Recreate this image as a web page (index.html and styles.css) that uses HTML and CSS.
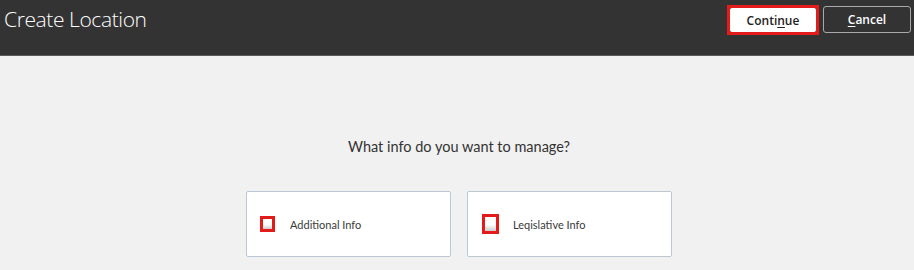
FILE: index.html
```html
<!DOCTYPE html>
<html lang="en">
<head>
  <meta charset="UTF-8" />
  <title>Create Location</title>
  <link rel="stylesheet" href="styles.css">
</head>
<body>
  <header class="topbar">
    <h1>Create Location</h1>
    <div class="actions">
      <span class="highlight"><button class="btn btn-primary">Conti<u>n</u>ue</button></span>
      <button class="btn btn-ghost"><u>C</u>ancel</button>
    </div>
  </header>

  <main class="content">
    <h2>What info do you want to manage?</h2>
    <div class="options">
      <label class="option">
        <span class="check"><span class="box"></span></span>
        <span class="text">Additional Info</span>
      </label>
      <label class="option option-alt">
        <span class="check"><span class="box"></span></span>
        <span class="text">Leqislative Info</span>
      </label>
    </div>
  </main>
</body>
</html>
```

FILE: styles.css
```css
:root {
  --bar-bg: #333333;
  --page-bg: #f1f1f1;
  --text: #333;
  --mark: #e31b1b;
  --card-border: #bcc7d4;
}

body {
  margin: 0;
  background: var(--page-bg);
  font-family: Lato, "Open Sans", sans-serif;
  color: var(--text);
}

.topbar {
  height: 55px;
  background: var(--bar-bg);
  border-bottom: 1px solid #5a5a5a;
  display: flex;
  justify-content: space-between;
  align-items: flex-start;
  padding: 0 3px 0 4px;
}

.topbar h1 {
  margin: 5px 0 0;
  font-family: "Open Sans", sans-serif;
  font-weight: 300;
  font-size: 21px;
  color: #fff;
  letter-spacing: -0.4px;
}

.actions {
  display: flex;
  align-items: flex-start;
  gap: 4px;
  padding-top: 5px;
}

.highlight {
  display: block;
  border: 3px solid var(--mark);
}

.btn {
  font-family: "Open Sans", sans-serif;
  font-size: 12px;
  font-weight: 600;
  height: 24px;
  padding: 0;
  border-radius: 2px;
  cursor: pointer;
}

.btn u {
  text-underline-offset: 2px;
}

.btn-primary {
  width: 86px;
  background: #fff;
  color: #222;
  border: none;
  display: block;
}

.btn-ghost {
  width: 88px;
  height: 27px;
  margin-top: 1px;
  background: transparent;
  color: #fff;
  border: 1px solid #a9a9a9;
  border-radius: 3px;
}

.content {
  display: flex;
  flex-direction: column;
  align-items: center;
  padding-left: 4px;
}

.content h2 {
  margin: 82px 0 0;
  font-size: 14.5px;
  font-weight: 400;
  color: var(--text);
}

.options {
  display: flex;
  gap: 16px;
  margin-top: 36px;
}

.option {
  box-sizing: border-box;
  width: 205px;
  height: 66px;
  background: #fff;
  border: 1px solid var(--card-border);
  border-radius: 2px;
  display: flex;
  align-items: center;
  padding-left: 13px;
}

.check {
  width: 9px;
  height: 10px;
  border: 3px solid var(--mark);
  background: #fff;
  display: block;
}

.check .box {
  display: block;
  height: 100%;
  background: linear-gradient(#fff 55%, #ccc);
}

.option-alt .check {
  width: 11px;
  height: 14px;
  margin-left: 1px;
}

.text {
  margin-left: 15px;
  font-size: 11px;
  color: #3a3a3a;
}

.option-alt .text {
  margin-left: 14px;
}
```
